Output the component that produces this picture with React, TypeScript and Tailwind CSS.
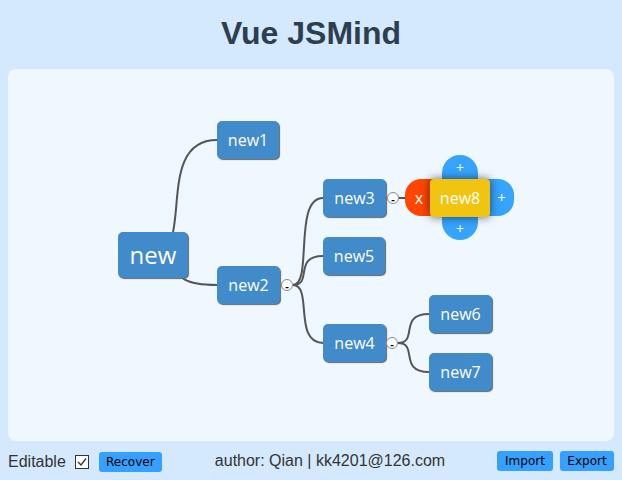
import React from 'react';

type MindNode = { id: string; label: string; x: number; y: number; w: number; h: number; root?: boolean };

const nodes: MindNode[] = [
    { id: 'root', label: 'new', x: 110, y: 163, w: 70, h: 46, root: true },
    { id: 'n1', label: 'new1', x: 209, y: 52, w: 62, h: 38 },
    { id: 'n2', label: 'new2', x: 209, y: 197, w: 63, h: 38 },
    { id: 'n3', label: 'new3', x: 315, y: 110, w: 63, h: 38 },
    { id: 'n5', label: 'new5', x: 315, y: 168, w: 62, h: 38 },
    { id: 'n4', label: 'new4', x: 315, y: 255, w: 63, h: 38 },
    { id: 'n6', label: 'new6', x: 421, y: 226, w: 63, h: 38 },
    { id: 'n7', label: 'new7', x: 421, y: 284, w: 63, h: 38 },
];

const expanders = [
    { x: 279, y: 216 },
    { x: 385, y: 129 },
    { x: 384, y: 274 },
];

// bezier like jsmind: parent point -> child point
const curve = (x1: number, y1: number, x2: number, y2: number) =>
    `M${x1} ${y1} C${x1 + ((x2 - x1) * 2) / 3} ${y1} ${x1} ${y2} ${x2} ${y2}`;

const lines = [
    curve(145, 186, 209, 71),
    curve(145, 186, 209, 216),
    curve(285, 216, 315, 129),
    curve(285, 216, 315, 187),
    curve(285, 216, 315, 274),
    curve(391, 129, 398, 129),
    curve(390, 274, 421, 245),
    curve(390, 274, 421, 303),
];

const nodeFont = { fontFamily: '"Open Sans", "DejaVu Sans", sans-serif' };
const btnFont = { fontFamily: '"DejaVu Sans", Verdana, sans-serif' };

export const App: React.FC = () => {
    return (
        <div className="w-[622px] h-[480px] bg-[#d5e9fe] flex flex-col overflow-hidden">
            <div className="h-[69px] flex items-center justify-center">
                <h1
                    className="text-[32px] font-bold text-[#2c3e50] leading-none pb-[4px]"
                    style={{ fontFamily: '"Liberation Sans", Arial, sans-serif' }}
                >
                    Vue JSMind
                </h1>
            </div>

            <div className="relative mx-2 h-[372px] rounded-lg bg-[#eff7ff]" style={nodeFont}>
                <svg className="absolute left-0 top-0" width="606" height="372">
                    {lines.map((d, i) => (
                        <path key={i} d={d} fill="none" stroke="#555" strokeWidth="2" />
                    ))}
                </svg>

                {nodes.map((n) => (
                    <div
                        key={n.id}
                        className={`absolute flex items-center justify-center rounded-[5px] bg-[#428bca] text-white shadow-[1px_1px_1px_#666] ${n.root ? 'text-[24px]' : 'text-[16px]'}`}
                        style={{ left: n.x, top: n.y, width: n.w, height: n.h }}
                    >
                        {n.label}
                    </div>
                ))}

                {expanders.map((e, i) => (
                    <div
                        key={i}
                        className="absolute w-[12px] h-[12px] rounded-full border border-[#888] bg-white flex items-center justify-center text-[11px] font-bold leading-none text-black"
                        style={{ left: e.x - 6, top: e.y - 6 }}
                    >
                        -
                    </div>
                ))}

                {/* selected node with edit handles */}
                <div className="absolute left-[434px] top-[86px] w-[36px] h-[26px] rounded-t-[18px] bg-[#36a3fe] text-white text-[14px] flex items-center justify-center pb-[2px]">
                    +
                </div>
                <div className="absolute left-[434px] top-[146px] w-[36px] h-[25px] rounded-b-[18px] bg-[#36a3fe] text-white text-[14px] flex items-center justify-center pt-[2px]">
                    +
                </div>
                <div className="absolute left-[478px] top-[110px] w-[28px] h-[37px] rounded-r-[16px] bg-[#36a3fe] text-white text-[15px] flex items-center justify-center pl-[3px]">
                    +
                </div>
                <div className="absolute left-[397px] top-[110px] w-[30px] h-[37px] rounded-l-[16px] bg-[#ff4500] text-white text-[16px] flex items-center justify-center pr-[2px]">
                    x
                </div>
                <div className="absolute left-[422px] top-[110px] w-[60px] h-[38px] rounded-[4px] bg-[#f1c40f] text-white text-[16px] flex items-center justify-center shadow-[0_0_10px_rgba(0,0,0,0.6)]">
                    new8
                </div>
            </div>

            <div
                className="flex-1 flex items-center px-2 pt-[2px] text-[16px] text-[#333]"
                style={{ fontFamily: '"Liberation Sans", Arial, sans-serif' }}
            >
                <span>Editable</span>
                <svg className="ml-[9px]" width="14" height="14" viewBox="0 0 14 14">
                    <rect x="0.5" y="0.5" width="13" height="13" fill="#fff" stroke="#333" />
                    <path d="M3 7 L6 10 L11 3.5" fill="none" stroke="#333" strokeWidth="1.3" />
                </svg>
                <button
                    className="ml-[10px] h-[20px] w-[63px] rounded-[3px] bg-[#35a0fe] text-black text-[12px] leading-none"
                    style={btnFont}
                >
                    Recover
                </button>
                <span className="ml-[53px] pb-[2px]">author: Qian | kk4201@126.com</span>
                <div className="ml-auto flex gap-[7px] pb-[2px]">
                    <button
                        className="h-[20px] w-[56px] rounded-[3px] bg-[#35a0fe] text-black text-[12px] leading-none"
                        style={btnFont}
                    >
                        Import
                    </button>
                    <button
                        className="h-[20px] w-[54px] rounded-[3px] bg-[#35a0fe] text-black text-[12px] leading-none"
                        style={btnFont}
                    >
                        Export
                    </button>
                </div>
            </div>
        </div>
    );
};

export default App;
